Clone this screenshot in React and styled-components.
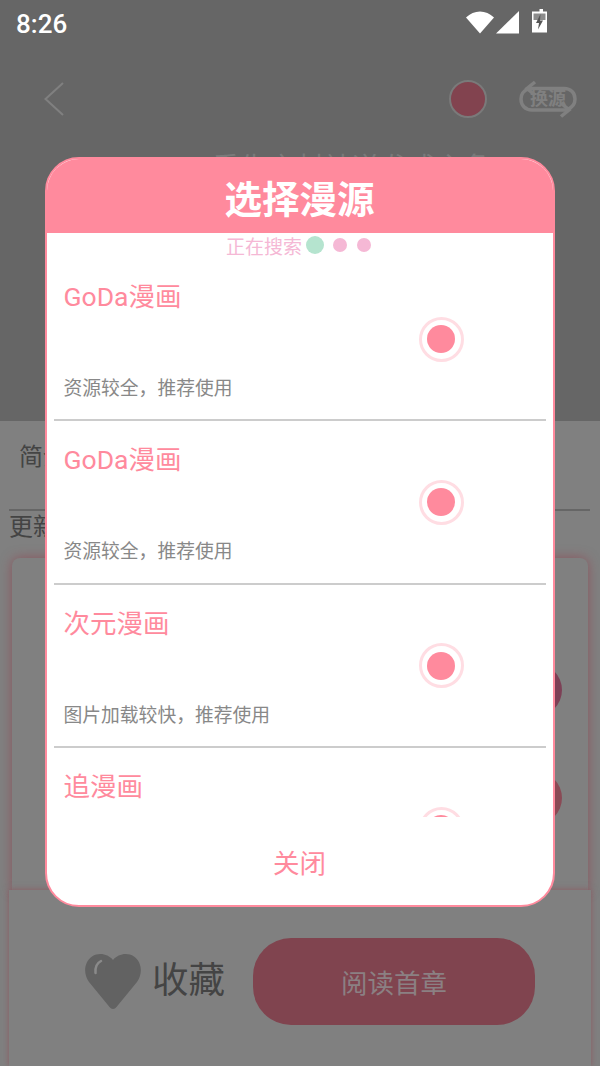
import styled, { createGlobalStyle } from "styled-components";

const Global = createGlobalStyle`
  html, body {
    margin: 0;
    padding: 0;
    background: #808080;
  }
  * {
    box-sizing: border-box;
  }
`;

const sources = [
  { name: "GoDa漫画", desc: "资源较全，推荐使用" },
  { name: "GoDa漫画", desc: "资源较全，推荐使用" },
  { name: "次元漫画", desc: "图片加载较快，推荐使用" },
  { name: "追漫画", desc: "资源较全，推荐使用" },
];

function App() {
  return (
    <Page>
      <Global />
      <Top>
        <StatusBar>
          <Clock>8:26</Clock>
          <StatusIcons>
            <svg width="81" height="26" viewBox="0 0 81 26">
              <path d="M0 9.5 C8 1.5 20 1.5 28 9.5 L14 25.5 Z" fill="#fff" />
              <path d="M30 25.5 L53 25.5 L53 3 Z" fill="#fff" />
              <path d="M70 3.5 H73.5 V1 H77 V3.5 H81 V24.5 H66 V3.5 Z" fill="#fff" />
              <path d="M67.5 5.5 H79.5 V12 H67.5 Z" fill="#8c8c8c" />
              <path d="M74.5 6 L70 15 H73 L72 21.5 L77 12.5 H74 Z" fill="#555" />
            </svg>
          </StatusIcons>
        </StatusBar>
        <NavBar>
          <svg width="20" height="34" viewBox="0 0 20 34">
            <path d="M19 1 L1.5 17 L19 33" fill="none" stroke="#808080" strokeWidth="2" />
          </svg>
          <NavActions>
            <ColorDot />
            <SwapButton>
              <svg width="58" height="38" viewBox="0 0 58 38">
                <g fill="none" stroke="#808080" strokeWidth="3.5">
                  <path d="M10 8.5 H45 C52 8.5 56 13 56 19 C56 24 54 27 49 29" />
                  <path d="M48 30 H13 C6 30 2 25 2 19 C2 14 4 11 9 9" />
                  <path d="M16 2 L8 8.5 L16 15" />
                  <path d="M42 23 L50 30 L42 36.5" />
                </g>
              </svg>
              <SwapLabel>换源</SwapLabel>
            </SwapButton>
          </NavActions>
        </NavBar>
        <BookTitle>重生之封神逆袭成主角</BookTitle>
      </Top>
      <Info>
        <Intro>简介：</Intro>
        <Updated>更新时间：</Updated>
      </Info>
      <Card>
        <CardDot />
        <CardDot $light />
      </Card>
      <BottomBar>
        <Favourite>
          <svg width="58" height="57" viewBox="0 0 58 57">
            <path
              d="M29 56 C27.5 56 26.5 55 25.5 54 L5 29 C-1 21 0 9 8 3.5 C15 -1 24 1 29 7 C34 1 43 -1 50 3.5 C58 9 59 21 53 29 L32.5 54 C31.5 55 30.5 56 29 56 Z"
              fill="#626262"
            />
            <path d="M11.5 20 C11 14 13 10 17 8" fill="none" stroke="#8a8a8a" strokeWidth="2.5" strokeLinecap="round" />
          </svg>
          <FavouriteLabel>收藏</FavouriteLabel>
        </Favourite>
        <ReadButton>阅读首章</ReadButton>
      </BottomBar>

      <Dialog>
        <DialogHead>选择漫源</DialogHead>
        <Searching>
          正在搜索
          <Dots>
            <LoadDot $size={18} $color="#b5e4cf" />
            <LoadDot $size={14} $color="#f5b8d5" />
            <LoadDot $size={14} $color="#f5b8d5" />
          </Dots>
        </Searching>
        <SourceList>
          {sources.map((s, i) => (
            <SourceItem key={i}>
              <SourceName>{s.name}</SourceName>
              <RadioRow>
                <Radio>
                  <RadioMark />
                </Radio>
              </RadioRow>
              <SourceDesc>{s.desc}</SourceDesc>
            </SourceItem>
          ))}
        </SourceList>
        <CloseButton>关闭</CloseButton>
      </Dialog>
    </Page>
  );
}

export default App;

const fontStack = `Roboto, "Noto Sans CJK SC", sans-serif`;

const Page = styled.div`
  position: relative;
  width: 600px;
  height: 1066px;
  overflow: hidden;
  background: #808080;
  font-family: ${fontStack};
`;
const Top = styled.div`
  height: 421px;
  background: #666666;
`;
const StatusBar = styled.div`
  display: flex;
  justify-content: space-between;
  align-items: flex-start;
  height: 66px;
  padding: 8px 53px 0 16px;
`;
const Clock = styled.div`
  color: #ffffff;
  font-size: 26px;
  font-weight: 500;
  line-height: 32px;
`;
const StatusIcons = styled.div`
  display: flex;
`;
const NavBar = styled.div`
  display: flex;
  justify-content: space-between;
  align-items: center;
  height: 66px;
  padding: 0 23px 0 44px;
`;
const NavActions = styled.div`
  display: flex;
  align-items: center;
  gap: 32px;
`;
const ColorDot = styled.div`
  width: 38px;
  height: 38px;
  border-radius: 50%;
  background: #82434f;
  border: 2px solid #7a7a7a;
`;
const SwapButton = styled.div`
  position: relative;
  width: 58px;
  height: 38px;
`;
const SwapLabel = styled.span`
  position: absolute;
  left: 11px;
  top: 9px;
  color: #808080;
  font-size: 18px;
  font-weight: 700;
  line-height: 20px;
  white-space: nowrap;
`;
const BookTitle = styled.div`
  margin-top: 17px;
  padding-left: 212px;
  color: #7a7a7a;
  font-size: 28px;
  line-height: 40px;
`;
const Info = styled.div`
  padding-top: 20px;
  color: #444444;
  font-size: 24px;
`;
const Intro = styled.div`
  height: 70px;
  margin: 0 10px 0 9px;
  padding-left: 10px;
  border-bottom: 2px solid #666666;
  line-height: 32px;
`;
const Updated = styled.div`
  padding-left: 9px;
  line-height: 32px;
`;
const Card = styled.div`
  display: flex;
  flex-direction: column;
  align-items: flex-end;
  gap: 54px;
  height: 332px;
  margin: 15px 12px 0;
  padding-top: 105px;
  background: #808080;
  border-radius: 8px 8px 0 0;
  box-shadow: 0 0 12px rgba(150, 50, 65, 0.55);
`;
const CardDot = styled.div`
  width: 54px;
  height: 54px;
  margin-right: 26px;
  border-radius: 50%;
  background: ${(p) => (p.$light ? "#8a4a55" : "#7d4056")};
`;
const BottomBar = styled.div`
  position: relative;
  display: flex;
  align-items: center;
  height: 176px;
  margin: 0 9px;
  padding: 6px 56px 0 75px;
  background: #808080;
  box-shadow: 0 0 6px rgba(150, 50, 65, 0.5);
`;
const Favourite = styled.div`
  display: flex;
  align-items: center;
  gap: 10px;
  width: 169px;
`;
const FavouriteLabel = styled.span`
  color: #444444;
  font-size: 36.5px;
  line-height: 44px;
`;
const ReadButton = styled.div`
  display: flex;
  justify-content: center;
  align-items: center;
  width: 282px;
  height: 87px;
  border-radius: 38px;
  background: #80444f;
  color: #8b8083;
  font-size: 26.5px;
`;
const Dialog = styled.div`
  position: absolute;
  left: 44.5px;
  top: 157px;
  display: flex;
  flex-direction: column;
  width: 510px;
  height: 750px;
  overflow: hidden;
  background: #ffffff;
  border: 2px solid #ff8a9d;
  border-radius: 34px;
`;
const DialogHead = styled.div`
  display: flex;
  justify-content: center;
  align-items: center;
  flex: none;
  height: 74px;
  background: #ff8a9d;
  color: #ffffff;
  font-size: 37.5px;
  font-weight: 700;
`;
const Searching = styled.div`
  display: flex;
  justify-content: center;
  align-items: center;
  flex: none;
  gap: 4px;
  height: 25px;
  padding-bottom: 1px;
  color: #f5b8d5;
  font-size: 19px;
`;
const Dots = styled.div`
  display: flex;
  align-items: center;
  gap: 6.5px;
`;
const LoadDot = styled.i`
  display: block;
  width: ${(p) => p.$size}px;
  height: ${(p) => p.$size}px;
  margin: 0 ${(p) => (18 - p.$size) / 2}px;
  background: ${(p) => p.$color};
  border-radius: 50%;
`;
const SourceList = styled.div`
  flex: none;
  height: 559px;
  overflow: hidden;
  padding: 0 7px;
`;
const SourceItem = styled.div`
  display: flex;
  flex-direction: column;
  height: 163.4px;
  padding: 23px 0 0 10px;
  border-bottom: 2px solid #cccccc;
`;
const SourceName = styled.div`
  color: #ff8a9d;
  font-size: 26.5px;
  line-height: 32px;
`;
const RadioRow = styled.div`
  display: flex;
  justify-content: flex-end;
  margin-top: 3.5px;
  padding-right: 82px;
`;
const Radio = styled.div`
  display: flex;
  justify-content: center;
  align-items: center;
  width: 45px;
  height: 45px;
  border: 3px solid #ffdde3;
  border-radius: 50%;
`;
const RadioMark = styled.div`
  width: 28px;
  height: 28px;
  border-radius: 50%;
  background: #ff8a9d;
`;
const SourceDesc = styled.div`
  margin-top: 14.5px;
  color: #888888;
  font-size: 18.8px;
  line-height: 26px;
`;
const CloseButton = styled.div`
  flex: 1;
  display: flex;
  justify-content: center;
  align-items: center;
  color: #ff8a9d;
  font-size: 26.5px;
`;
